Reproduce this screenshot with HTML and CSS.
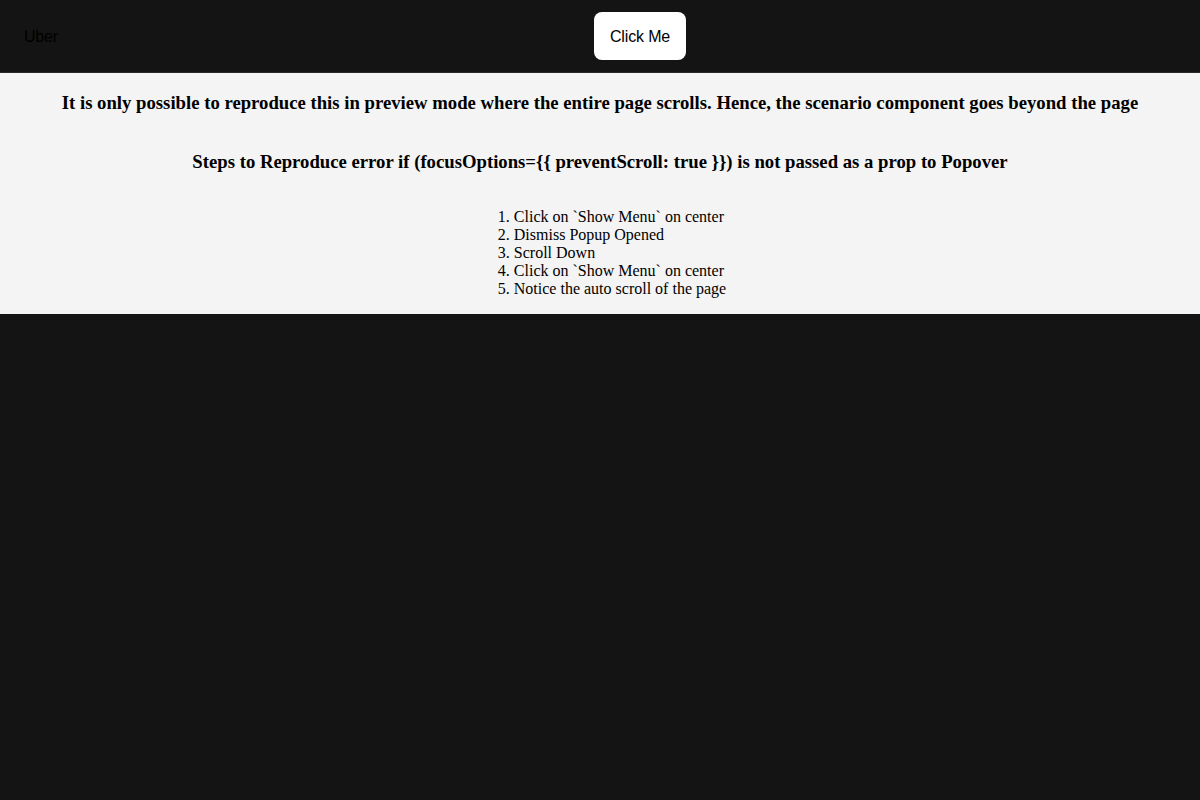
FILE: index.html
```html
<!DOCTYPE html>
<html>
<head>
<meta charset="utf-8">
<link rel="stylesheet" href="styles.css">
</head>
<body>
<header class="topbar">
  <div class="brand">Uber</div>
  <div class="center">
    <button class="btn">Click Me</button>
  </div>
</header>
<main class="scenario">
  <h3>It is only possible to reproduce this in preview mode where the entire page scrolls. Hence, the scenario component goes beyond the page</h3>
  <h3>Steps to Reproduce error if (focusOptions={{ preventScroll: true }}) is not passed as a prop to Popover</h3>
  <ol class="steps">
    <li>Click on `Show Menu` on center</li>
    <li>Dismiss Popup Opened</li>
    <li>Scroll Down</li>
    <li>Click on `Show Menu` on center</li>
    <li>Notice the auto scroll of the page</li>
  </ol>
</main>
</body>
</html>
```
FILE: styles.css
```css
html, body {
  margin: 0;
  padding: 0;
  background: #141414;
  height: 100%;
}
.topbar {
  height: 73px;
  box-sizing: border-box;
  display: flex;
  align-items: center;
  padding: 0 24px;
  background: #141414;
  border-bottom: 1px solid #2a2a2a;
  font-family: "Liberation Sans", Arial, sans-serif;
  font-size: 16px;
}
.brand {
  color: #000;
  width: 570px;
  letter-spacing: -0.2px;
  padding-top: 2px;
}
.btn {
  height: 48px;
  width: 92px;
  padding: 2px 0 0;
  border: none;
  border-radius: 8px;
  background: #fff;
  color: #000;
  font-family: "Liberation Sans", Arial, sans-serif;
  font-size: 16px;
  letter-spacing: -0.15px;
  cursor: pointer;
}
.scenario {
  display: flex;
  flex-direction: column;
  align-items: center;
  background: #f4f4f4;
  font-family: "Liberation Serif", "Times New Roman", serif;
  color: #000;
}
.scenario h3 {
  font-size: 18.72px;
  margin: 18.72px 0;
  text-align: center;
}
.steps {
  margin: 16px 0;
  padding-left: 40px;
  font-size: 16px;
}
```
